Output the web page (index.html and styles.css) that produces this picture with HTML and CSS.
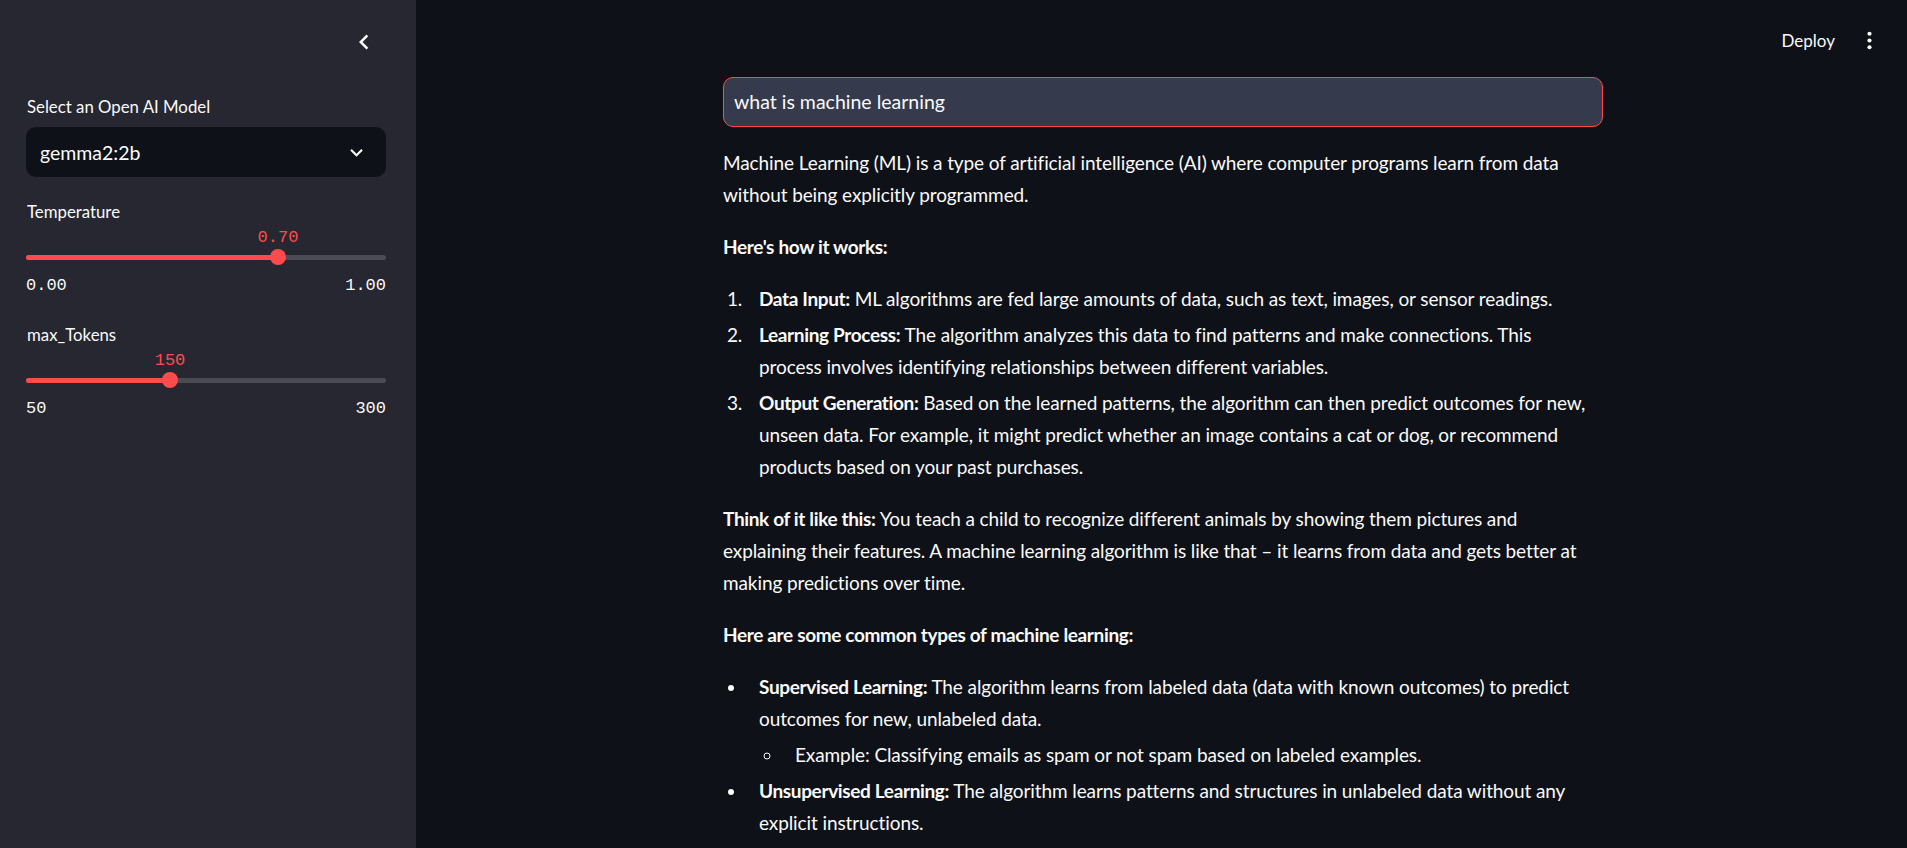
FILE: index.html
```html
<!DOCTYPE html>
<html lang="en">
<head>
<meta charset="utf-8">
<title>Streamlit</title>
<link rel="stylesheet" href="styles.css">
</head>
<body>
<div class="app">
  <aside class="sidebar">
    <div class="sidebar-header">
      <svg class="collapse-icon" viewBox="0 0 24 24" width="30" height="30"><path d="M15.41 7.41L14 6l-6 6 6 6 1.41-1.41L10.83 12z" fill="#fafafa"/></svg>
    </div>
    <div class="widgets">
      <div class="widget">
        <div class="widget-label">Select an Open AI Model</div>
        <div class="selectbox">
          <span class="select-value">gemma2:2b</span>
          <svg class="select-chevron" viewBox="0 0 24 24" width="25" height="25"><path d="M7.41 8.59L12 13.17l4.59-4.58L18 10l-6 6-6-6 1.41-1.41z" fill="#fafafa"/></svg>
        </div>
      </div>
      <div class="widget">
        <div class="widget-label">Temperature</div>
        <div class="slider">
          <div class="track-row">
            <div class="track">
              <div class="track-fill" style="width:70%"></div>
              <div class="thumb" style="left:70%"><span class="thumb-value">0.70</span></div>
            </div>
          </div>
          <div class="ticks"><span>0.00</span><span>1.00</span></div>
        </div>
      </div>
      <div class="widget">
        <div class="widget-label">max_Tokens</div>
        <div class="slider">
          <div class="track-row">
            <div class="track">
              <div class="track-fill" style="width:40%"></div>
              <div class="thumb" style="left:40%"><span class="thumb-value">150</span></div>
            </div>
          </div>
          <div class="ticks"><span>50</span><span>300</span></div>
        </div>
      </div>
    </div>
  </aside>
  <main class="main">
    <header class="topbar">
      <span class="deploy">Deploy</span>
      <svg class="kebab" viewBox="0 0 24 24" width="25" height="25"><circle cx="12" cy="5.5" r="2" fill="#fafafa"/><circle cx="12" cy="12" r="2" fill="#fafafa"/><circle cx="12" cy="18.5" r="2" fill="#fafafa"/></svg>
    </header>
    <div class="content">
      <div class="block">
        <div class="text-input">what is machine learning</div>
        <div class="markdown">
          <p>Machine Learning (ML) is a type of artificial intelligence (AI) where computer programs learn from data<br>without being explicitly programmed.</p>
          <p><strong>Here's how it works:</strong></p>
          <ol>
            <li><strong>Data Input:</strong> ML algorithms are fed large amounts of data, such as text, images, or sensor readings.</li>
            <li><strong>Learning Process:</strong> The algorithm analyzes this data to find patterns and make connections. This<br>process involves identifying relationships between different variables.</li>
            <li><strong>Output Generation:</strong> Based on the learned patterns, the algorithm can then predict outcomes for new,<br>unseen data. For example, it might predict whether an image contains a cat or dog, or recommend<br>products based on your past purchases.</li>
          </ol>
          <p><strong>Think of it like this:</strong> You teach a child to recognize different animals by showing them pictures and<br>explaining their features. A machine learning algorithm is like that – it learns from data and gets better at<br>making predictions over time.</p>
          <p><strong>Here are some common types of machine learning:</strong></p>
          <ul>
            <li><strong>Supervised Learning:</strong> The algorithm learns from labeled data (data with known outcomes) to predict<br>outcomes for new, unlabeled data.
              <ul>
                <li>Example: Classifying emails as spam or not spam based on labeled examples.</li>
              </ul>
            </li>
            <li><strong>Unsupervised Learning:</strong> The algorithm learns patterns and structures in unlabeled data without any<br>explicit instructions.</li>
          </ul>
        </div>
      </div>
    </div>
  </main>
</div>
</body>
</html>
```
FILE: styles.css
```css
* { box-sizing: border-box; }
html, body { margin: 0; padding: 0; height: 100%; }
body {
  background: #0e1117;
  color: #fafafa;
  font-family: Lato, "Liberation Sans", sans-serif;
  overflow: hidden;
}
.app { display: flex; height: 100vh; }

.sidebar {
  width: 416px;
  flex: none;
  background: #262730;
  padding: 0 30px 0 26px;
}
.sidebar-header {
  height: 84px;
  display: flex;
  justify-content: flex-end;
  align-items: center;
  padding-right: 7px;
}
.widgets { display: flex; flex-direction: column; gap: 20px; padding-top: 8px; }
.widget-label {
  height: 30px;
  line-height: 30px;
  font-size: 16.8px;
  margin-bottom: 5px;
  padding-left: 1px;
}
.selectbox {
  height: 50px;
  background: #0e1117;
  border-radius: 10px;
  display: flex;
  align-items: center;
  justify-content: space-between;
  padding: 0 17px 0 14px;
}
.select-value { font-size: 19.5px; }

.slider { padding-top: 15px; }
.track-row { height: 20px; display: flex; align-items: center; }
.track {
  position: relative;
  width: 100%;
  height: 5px;
  border-radius: 3px;
  background: #4a4b53;
}
.track-fill { height: 100%; background: #ff4b4b; border-radius: 3px; }
.thumb {
  position: absolute;
  top: 50%;
  width: 16px;
  height: 16px;
  margin: -8px 0 0 -8px;
  border-radius: 50%;
  background: #ff4b4b;
}
.thumb-value {
  position: absolute;
  bottom: 17px;
  left: 50%;
  transform: translateX(-50%);
  font-family: "Liberation Mono", "DejaVu Sans Mono", monospace;
  font-size: 17px;
  line-height: 20px;
  color: #ff4b4b;
  white-space: nowrap;
}
.ticks {
  height: 33px;
  padding-top: 10px;
  display: flex;
  justify-content: space-between;
  font-family: "Liberation Mono", "DejaVu Sans Mono", monospace;
  font-size: 17px;
  line-height: 18px;
}

.main { flex: 1; display: flex; flex-direction: column; min-width: 0; }
.topbar {
  height: 77px;
  flex: none;
  display: flex;
  justify-content: flex-end;
  align-items: center;
  gap: 22px;
  padding: 3px 25px 0 0;
}
.deploy { font-size: 17px; }
.content { display: flex; justify-content: center; padding-left: 3px; }
.block { width: 880px; }
.text-input {
  height: 50px;
  border: 1px solid #ff4b4b;
  border-radius: 10px;
  background: #353b4c;
  font-size: 19.5px;
  line-height: 48px;
  padding-left: 10px;
  margin-bottom: 20px;
}
.markdown { font-size: 19px; line-height: 32px; letter-spacing: -0.1px; }
.markdown p { margin: 0 0 20px; }
.markdown strong { font-weight: 700; letter-spacing: -0.35px; }
.markdown ol, .markdown ul { margin: 0 0 20px; padding-left: 0; }
.markdown li { margin: 4px 0 4px 24px; padding-left: 12px; }
.markdown li ul { margin: 0; }
```
